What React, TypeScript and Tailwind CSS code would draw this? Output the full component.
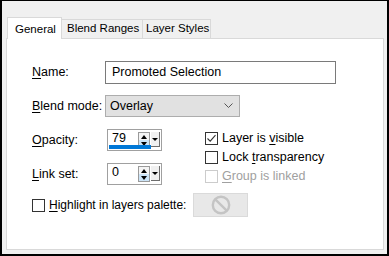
import React from 'react';

const font = { fontFamily: '"Liberation Sans", Arial, sans-serif' };

function U({ children }: { children: React.ReactNode }) {
  return <span className="underline underline-offset-2">{children}</span>;
}

function SpinBox({ value, bar }: { value: string; bar?: boolean }) {
  return (
    <div className="relative flex h-[22px] w-[55px] items-start border border-[#a0a0a0] bg-white pt-[2px]">
      <span className="flex-1 pl-[4px] text-[12.5px] leading-[12px] text-black">{value}</span>
      <div className="flex h-[16px] w-[12px] flex-col border border-[#9a9a9a]">
        <div className="flex flex-1 items-center justify-center bg-[#f4f4f4]">
          <div className="h-0 w-0 border-x-[3px] border-b-[4px] border-x-transparent border-b-black" />
        </div>
        <div className="flex flex-1 items-center justify-center bg-[#cce4f7]">
          <div className="h-0 w-0 border-x-[3px] border-t-[4px] border-x-transparent border-t-black" />
        </div>
      </div>
      <div className="ml-[1px] mr-[1px] flex h-[15px] w-[9px] items-center justify-center border-b border-r border-[#6d6d6d] bg-[#f0f0f0]">
        <div className="h-0 w-0 border-x-[3px] border-t-[3px] border-x-transparent border-t-black" />
      </div>
      {bar && <div className="absolute bottom-[1px] left-[1px] h-[4px] w-[42px] bg-[#0078d7]" />}
    </div>
  );
}

function Check({ checked, disabled, children }: { checked?: boolean; disabled?: boolean; children: React.ReactNode }) {
  return (
    <div className="flex h-[19px] items-center gap-[4px] whitespace-nowrap">
      <div className={`flex h-[13px] w-[13px] shrink-0 items-center justify-center border bg-white ${disabled ? 'border-[#cccccc]' : 'border-[#333333]'}`}>
        {checked && (
          <svg width="11" height="11" viewBox="0 0 11 11">
            <path d="M1.5 5.5 L4.2 8.2 L9.5 2.2" fill="none" stroke="#333" strokeWidth="1.1" />
          </svg>
        )}
      </div>
      <span className={disabled ? 'text-[#a0a0a0]' : 'text-black'}>{children}</span>
    </div>
  );
}

export default function App() {
  return (
    <div style={font} className="flex h-[256px] w-[389px] flex-col whitespace-nowrap border-x-2 border-b-2 border-t border-black bg-[#f0f0f0] text-[12.5px]">
      <div className="flex h-[37px] items-end pl-[5px] text-[11.5px]">
        <div className="relative z-10 -mb-px flex h-[22px] w-[55px] shrink-0 items-start border-x border-t border-[#d9d9d9] bg-white pl-[7px] pt-[3px] text-black">
          General
        </div>
        <div className="flex h-[19px] w-[81px] shrink-0 items-center overflow-hidden border-r border-t border-[#d9d9d9] pl-[5px] text-black">
          Blend Ranges
        </div>
        <div className="flex h-[19px] w-[68px] shrink-0 items-center overflow-hidden border-r border-t border-[#d9d9d9] pl-[3px] text-black">
          Layer Styles
        </div>
      </div>
      <div className="ml-[4px] mr-[3px] flex h-[212px] flex-col border border-[#d9d9d9] bg-white pl-[25px] pt-[22px] text-black">
        <div className="flex h-[23px] items-center">
          <span className="w-[73px]"><U>N</U>ame:</span>
          <div className="flex h-[23px] w-[231px] items-center border border-[#7a7a7a] pl-[6px]">Promoted Selection</div>
        </div>
        <div className="mt-[11px] flex h-[22px] items-center">
          <span className="w-[73px]"><U>B</U>lend mode:</span>
          <div className="flex h-[22px] w-[135px] items-center justify-between border border-[#adadad] bg-[#e1e1e1] pl-[4px] pr-[6px]">
            <span>Overlay</span>
            <svg width="9" height="6" viewBox="0 0 9 6">
              <path d="M0.5 0.5 L4.5 4.5 L8.5 0.5" fill="none" stroke="#555" strokeWidth="1" />
            </svg>
          </div>
        </div>
        <div className="mt-[12px] flex">
          <div className="flex w-[173px] flex-col gap-[12px]">
            <div className="flex items-center">
              <span className="w-[75px]"><U>O</U>pacity:</span>
              <SpinBox value="79" bar />
            </div>
            <div className="flex items-center">
              <span className="w-[75px]"><U>L</U>ink set:</span>
              <SpinBox value="0" />
            </div>
          </div>
          <div className="flex flex-col">
            <Check checked>Layer is <U>v</U>isible</Check>
            <Check>Lock <U>t</U>ransparency</Check>
            <Check disabled><U>G</U>roup is linked</Check>
          </div>
        </div>
        <div className="mt-[7px] flex h-[24px] items-center">
          <div className="w-[161px] shrink-0 text-[12px]">
            <Check><U>H</U>ighlight in layers palette:</Check>
          </div>
          <div className="flex h-[24px] w-[55px] shrink-0 items-center justify-center border border-[#dadada] bg-[#e8e8e8]">
            <svg width="20" height="20" viewBox="0 0 20 20">
              <circle cx="10" cy="10" r="8.2" fill="none" stroke="#c4c4c4" strokeWidth="2.4" />
              <path d="M4.3 4.3 L15.7 15.7" stroke="#c4c4c4" strokeWidth="2.4" />
            </svg>
          </div>
        </div>
      </div>
    </div>
  );
}
